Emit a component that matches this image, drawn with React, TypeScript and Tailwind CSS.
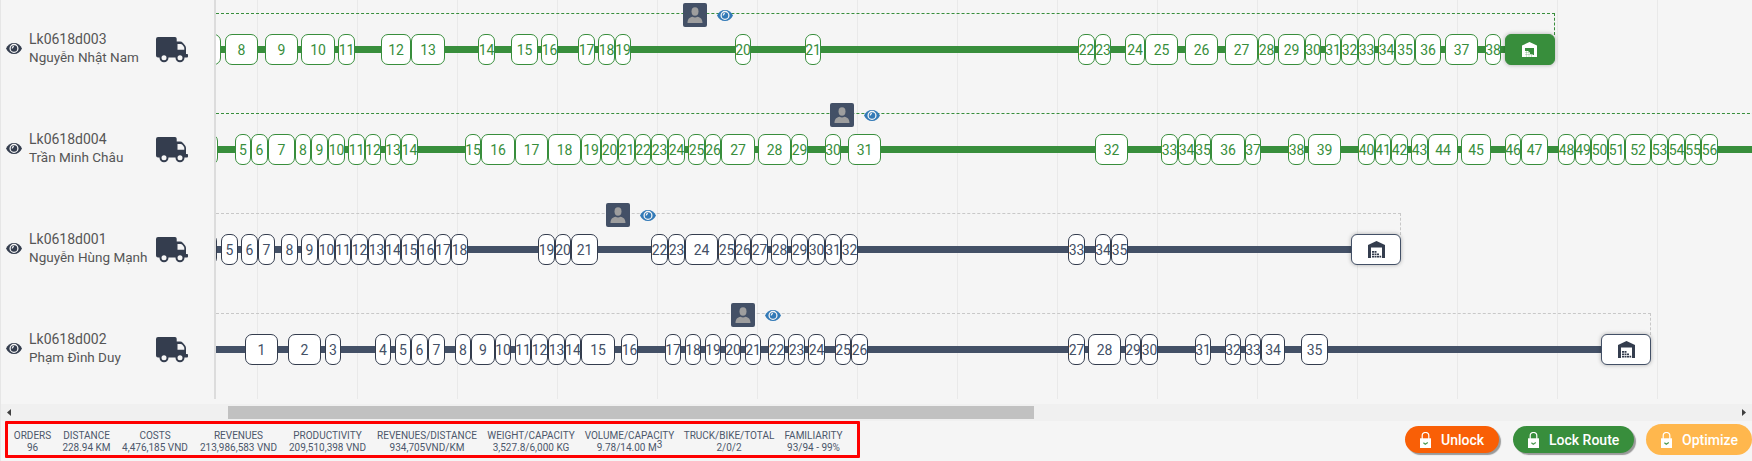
import React from "react";

type Stop = [number, number, number];
type Route = {
  id: string;
  driver: string;
  locked: boolean;
  avatar: number;
  end: number;
  depot?: number;
  lead?: number;
  stops: Stop[];
};

const AXIS = 216;
const DEPOT_WIDTH = 50;

const routes: Route[] = [
  {
    id: "Lk0618d003", driver: "Nguyễn Nhật Nam", locked: true, avatar: 682, end: 1555, depot: 1505, lead: 221,
    stops: [
      [8, 225, 258], [9, 265, 298], [10, 301, 335], [11, 338, 355], [12, 381, 411], [13, 411, 445],
      [14, 478, 495], [15, 511, 538], [16, 541, 558], [17, 578, 595], [18, 598, 615], [19, 615, 631],
      [20, 735, 751], [21, 805, 821], [22, 1078, 1095], [23, 1095, 1111], [24, 1125, 1145],
      [25, 1145, 1178], [26, 1185, 1218], [27, 1225, 1258], [28, 1258, 1275], [29, 1278, 1305],
      [30, 1305, 1321], [31, 1325, 1341], [32, 1341, 1358], [33, 1358, 1375], [34, 1378, 1395],
      [35, 1395, 1415], [36, 1415, 1441], [37, 1445, 1478], [38, 1485, 1501],
    ],
  },
  {
    id: "Lk0618d004", driver: "Trần Minh Châu", locked: true, avatar: 829, end: 1800, lead: 218,
    stops: [
      [5, 235, 251], [6, 251, 268], [7, 268, 295], [8, 295, 311], [9, 311, 328], [10, 328, 345],
      [11, 348, 365], [12, 365, 381], [13, 385, 401], [14, 401, 418], [15, 465, 481], [16, 481, 515],
      [17, 515, 548], [18, 548, 581], [19, 581, 601], [20, 601, 618], [21, 618, 635], [22, 635, 651],
      [23, 651, 668], [24, 668, 685], [25, 688, 705], [26, 705, 721], [27, 721, 755], [28, 758, 791],
      [29, 791, 808], [30, 825, 841], [31, 848, 881], [32, 1095, 1128], [33, 1161, 1178],
      [34, 1178, 1195], [35, 1195, 1211], [36, 1211, 1245], [37, 1245, 1261], [38, 1288, 1305],
      [39, 1308, 1341], [40, 1358, 1375], [41, 1375, 1391], [42, 1391, 1408], [43, 1411, 1428],
      [44, 1428, 1458], [45, 1461, 1491], [46, 1505, 1521], [47, 1521, 1548], [48, 1558, 1575],
      [49, 1575, 1591], [50, 1591, 1608], [51, 1608, 1625], [52, 1625, 1651], [53, 1651, 1668],
      [54, 1668, 1685], [55, 1685, 1701], [56, 1701, 1718],
    ],
  },
  {
    id: "Lk0618d001", driver: "Nguyễn Hùng Mạnh", locked: false, avatar: 605, end: 1401, depot: 1351, lead: 217,
    stops: [
      [5, 221, 238], [6, 241, 258], [7, 258, 275], [8, 281, 298], [9, 301, 318], [10, 318, 335],
      [11, 335, 351], [12, 351, 368], [13, 368, 385], [14, 385, 401], [15, 401, 418], [16, 418, 435],
      [17, 435, 451], [18, 451, 468], [19, 538, 555], [20, 555, 571], [21, 571, 598], [22, 651, 668],
      [23, 668, 685], [24, 685, 718], [25, 718, 735], [26, 735, 751], [27, 751, 768], [28, 771, 788],
      [29, 791, 808], [30, 808, 825], [31, 825, 841], [32, 841, 858], [33, 1068, 1085],
      [34, 1095, 1111], [35, 1111, 1128],
    ],
  },
  {
    id: "Lk0618d002", driver: "Phạm Đình Duy", locked: false, avatar: 730, end: 1651, depot: 1601,
    stops: [
      [1, 245, 278], [2, 288, 321], [3, 325, 341], [4, 375, 391], [5, 395, 411], [6, 411, 428],
      [7, 428, 445], [8, 455, 471], [9, 471, 495], [10, 495, 511], [11, 515, 531], [12, 531, 548],
      [13, 548, 565], [14, 565, 581], [15, 581, 615], [16, 621, 638], [17, 665, 681], [18, 685, 701],
      [19, 705, 721], [20, 725, 741], [21, 745, 761], [22, 768, 785], [23, 788, 805], [24, 808, 825],
      [25, 835, 851], [26, 851, 868], [27, 1068, 1085], [28, 1088, 1121], [29, 1125, 1141],
      [30, 1141, 1158], [31, 1195, 1211], [32, 1225, 1241], [33, 1245, 1261], [34, 1261, 1285],
      [35, 1301, 1328],
    ],
  },
];

const stats: { label: string; value: React.ReactNode; width: string }[] = [
  { label: "ORDERS", value: "96", width: "w-[49px]" },
  { label: "DISTANCE", value: "228.94 KM", width: "w-[59px]" },
  { label: "COSTS", value: "4,476,185 VND", width: "w-[78px]" },
  { label: "REVENUES", value: "213,986,583 VND", width: "w-[89px]" },
  { label: "PRODUCTIVITY", value: "209,510,398 VND", width: "w-[89px]" },
  { label: "REVENUES/DISTANCE", value: "934,705VND/KM", width: "w-[110px]" },
  { label: "WEIGHT/CAPACITY", value: "3,527.8/6,000 KG", width: "w-[98px]" },
  {
    label: "VOLUME/CAPACITY",
    value: (<>9.78/14.00 M<span className="inline-block -translate-y-[3px] leading-none">3</span></>),
    width: "w-[99px]",
  },
  { label: "TRUCK/BIKE/TOTAL", value: "2/0/2", width: "w-[100px]" },
  { label: "FAMILIARITY", value: "93/94 - 99%", width: "w-[69px]" },
];

function Eye({ className }: { className: string }) {
  return (
    <svg viewBox="0 0 16 11" className={className}>
      <path fill="currentColor" d="M8 0C4.4 0 1.5 2 0 5.5 1.500 9 4.400 11 8 11s6.500-2 8-5.500C14.500 2 11.600 0 8 0Z" />
      <circle cx="8" cy="5.400" r="3.900" fill="none" stroke="#f5f5f5" strokeWidth="1.300" />
      <path d="M6.200 5.400A1.800 1.800 0 0 1 8 3.600" fill="none" stroke="#f5f5f5" strokeWidth="1.100" />
    </svg>
  );
}

function Truck() {
  return (
    <svg viewBox="0 0 32 26" className="h-[26px] w-8 text-[#343d4e]">
      <path
        fill="currentColor"
        fillRule="evenodd"
        d="M2 0H19a1.700 1.700 0 0 1 1.700 1.700V4.600H24a4 4 0 0 1 3 1.300l2.100 2.700a4 4 0 0 1 .9 2.500V17h1.200a.8.8 0 0 1 .8.8v1.700a.9.9 0 0 1-.9.900H2a2 2 0 0 1-2-2V2A2 2 0 0 1 2 0ZM21.500 7v5.800h6.800v-1.600a3 3 0 0 0-.6-1.800l-1.100-1.400A2.600 2.600 0 0 0 24.500 7Z"
      />
      <circle cx="8" cy="20.700" r="3.500" fill="#f5f5f5" stroke="currentColor" strokeWidth="2" />
      <circle cx="24" cy="20.700" r="3.500" fill="#f5f5f5" stroke="currentColor" strokeWidth="2" />
    </svg>
  );
}

function Warehouse({ className }: { className: string }) {
  return (
    <svg viewBox="0 0 17 17" className={className}>
      <path fill="currentColor" fillRule="evenodd" d="M0 4 8.500 0 17 4V17H14V6.500H3V17H0Z" />
      <path fill="currentColor" d="M4 10h2v1.700H4zM6.500 10h2v1.700h-2zM4 12.400h2v1.700H4zM6.500 12.400h2v1.700h-2zM9 12.400h2v1.700H9zM4 14.800h2v1.700H4zM6.500 14.800h2v1.700h-2zM9 14.800h2v1.700H9zM11.500 14.800h1.700v1.700h-1.700z" />
    </svg>
  );
}

function WarehouseSolid({ className }: { className: string }) {
  return (
    <svg viewBox="0 0 15 15" className={className}>
      <path fill="currentColor" fillRule="evenodd" d="M0 3.500 7.500 0 15 3.500V15H0ZM3 6V9H6.500V10H8V12H10.500V13H12V6Z" />
      <path stroke="#388e3c" strokeWidth=".5" strokeOpacity=".5" d="M3 10.500h5M3 12.500h7M4.500 9v6M7 10v5M9.500 12v3" />
    </svg>
  );
}

function Lock() {
  return (
    <svg viewBox="0 0 11 16" className="h-4 w-[11px] shrink-0">
      <path d="M2.200 7V3.800a3.300 3.300 0 0 1 6.600 0V7" fill="none" stroke="currentColor" strokeWidth="1.200" />
      <path d="M0 6.300h11V16H0Z" fill="currentColor" />
      <path d="M3.400 10.800 5.300 12.300 7.800 10.600" fill="none" stroke="#4c9a50" strokeWidth="1.200" />
    </svg>
  );
}

function Avatar() {
  return (
    <span className="flex size-6 items-end justify-center rounded-[2px] bg-[#435066] pb-1">
      <svg viewBox="0 0 16 16" className="size-4 text-[#9e9e9e]">
        <ellipse cx="8" cy="4.500" rx="3.500" ry="4.200" fill="currentColor" />
        <path fill="currentColor" d="M.5 16C.5 12 2.500 10.300 5.500 9.700Q8 11.200 10.500 9.700C13.500 10.300 15.500 12 15.500 16Z" />
      </svg>
    </span>
  );
}

function StopBox({ from, to, prev, label, tone }: { from: number; to: number; prev: number; label?: number; tone: string }) {
  return (
    <span
      className={`flex h-[31px] shrink-0 items-center justify-center rounded-[7px] border bg-white text-sm leading-none ${tone}`}
      style={{ marginLeft: from - prev, width: to - from }}
    >
      {label}
    </span>
  );
}

function RouteTrack({ route }: { route: Route }) {
  const tone = route.locked ? "border-[#388e3c] text-[#388e3c]" : "border-[#343d4e] text-[#435066]";
  const bar = route.locked ? "bg-[#388e3c]" : "bg-[#435066]";
  const dash = route.locked ? "border-[#388e3c]" : "border-[#c8c8c8]";
  const first = route.lead ? route.lead : AXIS;
  const last = route.stops[route.stops.length - 1][2];
  return (
    <div className="relative h-[100px] min-w-0 flex-1 overflow-hidden">
      <div
        className={`absolute top-[13px] left-0 h-[22px] border-t border-r border-dashed ${dash}`}
        style={{ width: route.end - AXIS }}
      />
      <div className={`absolute top-[46px] left-0 h-[7px] ${bar}`} style={{ width: (route.depot ?? 1800) - AXIS }} />
      <div className="absolute top-[3px] flex items-center gap-[10px]" style={{ left: route.avatar - AXIS + 0.5 }}>
        <Avatar />
        <Eye className="mt-px h-[11px] w-4 text-[#337ab7]" />
      </div>
      <div className="relative mt-[34px] flex h-[31px]">
        {route.lead && <StopBox from={first - 17} to={first} prev={AXIS} tone={tone} />}
        {route.stops.map(([n, from, to], i) => (
          <StopBox key={n} label={n} from={from} to={to} prev={i ? route.stops[i - 1][2] : first} tone={tone} />
        ))}
        {route.depot && (
          <span
            className={`flex h-[31px] shrink-0 items-center justify-center rounded-[6px] border shadow-[0_0_4px_rgba(0,0,0,0.3)] ${
              route.locked ? "border-[#388e3c] bg-[#388e3c] text-white" : "border-[#435066] bg-white text-[#343d4e]"
            }`}
            style={{ marginLeft: route.depot - last, width: DEPOT_WIDTH }}
          >
            {route.locked ? (
              <WarehouseSolid className="-ml-px size-[15px]" />
            ) : (
              <Warehouse className="size-[17px]" />
            )}
          </span>
        )}
      </div>
    </div>
  );
}

function ActionButton({ label, className }: { label: string; className: string }) {
  return (
    <button className={`flex shrink-0 items-center rounded-full pl-[15px] text-sm font-medium text-white ${className}`}>
      <Lock />
      <span className="ml-[10px] whitespace-nowrap">{label}</span>
    </button>
  );
}

export default function App() {
  return (
    <div className="flex h-[461px] w-[1752px] flex-col overflow-hidden border-l border-[#e6e6e6] bg-[#f5f5f5] font-[Roboto,sans-serif]">
      <div className="relative h-[399px] shrink-0 overflow-hidden">
        <div className="absolute inset-y-0 left-[256px] right-0 bg-[repeating-linear-gradient(to_right,#e9e9e9_0px,#e9e9e9_1px,transparent_1px,transparent_100px)]" />
        {routes.map((route) => (
          <div key={route.id} className="relative flex h-[100px]">
            <div className="flex w-[215px] shrink-0 border-r-2 border-[#dcdcdc] pl-[5px]">
              <Eye className="mt-[43px] h-[11px] w-4 text-[#343d4e]" />
              <div className="mt-[30px] ml-[7px] w-[127px] text-sm leading-[18px] whitespace-nowrap text-[#555]">
                <div>{route.id}</div>
                <div className="text-[13.500px]">{route.driver}</div>
              </div>
              <div className="mt-[37px]"><Truck /></div>
            </div>
            <RouteTrack route={route} />
          </div>
        ))}
      </div>

      <div className="mt-[5px] flex h-[17px] shrink-0 items-center justify-between bg-[#f0f0f0] pr-[6px] pl-[6px]">
        <svg viewBox="0 0 4 7" className="h-[7px] w-1"><path d="M4 0 0 3.500 4 7Z" fill="#404040" /></svg>
        <div className="mr-auto ml-[217px] h-[13px] w-[806px] bg-[#c1c1c1]" />
        <svg viewBox="0 0 4 7" className="h-[7px] w-1"><path d="M0 0 4 3.500 0 7Z" fill="#404040" /></svg>
      </div>

      <div className="flex min-h-0 flex-1 items-start justify-between">
        <div className="ml-1 flex h-[37px] w-[855px] rounded-[1px] border-[3px] border-[#fe0000] pt-[6px] text-[10px] text-[#4c576b]">
          {stats.map((s) => (
            <div key={s.label} className={`flex shrink-0 flex-col items-center leading-[12px] whitespace-nowrap ${s.width}`}>
              <div>{s.label}</div>
              <div>{s.value}</div>
            </div>
          ))}
        </div>
        <div className="mt-[3px] flex items-center">
          <ActionButton label="Unlock" className="h-[27px] w-[94px] bg-[#f95f06] shadow-[2px_2px_1px_#999]" />
          <ActionButton label="Lock Route" className="ml-[14px] h-[27px] w-[121px] bg-[#388e3c] shadow-[2px_2px_1px_#999]" />
          <ActionButton label="Optimize" className="ml-3 h-[31px] w-[106px] bg-[#ffb74d]" />
        </div>
      </div>
    </div>
  );
}
